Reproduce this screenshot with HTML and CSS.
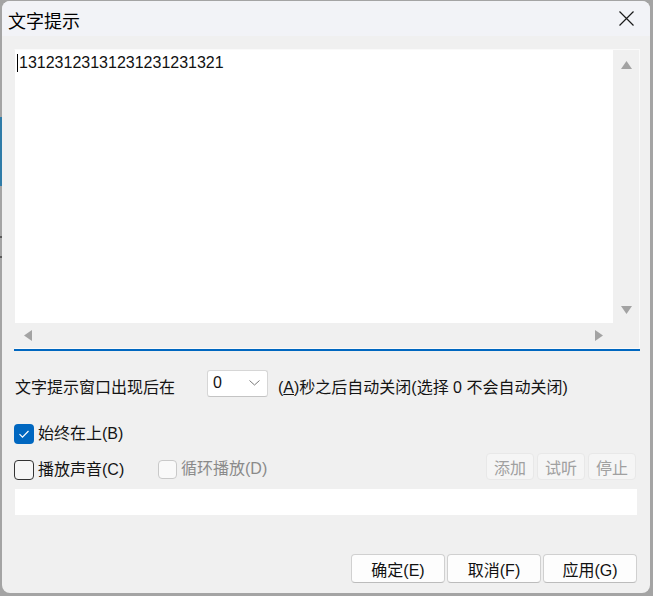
FILE: index.html
```html
<!DOCTYPE html>
<html lang="zh-CN">
<head>
<meta charset="utf-8">
<title>文字提示</title>
<link rel="stylesheet" href="styles.css">
</head>
<body>
<div class="window">
  <div class="titlebar">
    <span class="title">文字提示</span>
    <svg class="close" width="15" height="15" viewBox="0 0 15 15"><path d="M0.5 0.5 L14.5 14.5 M14.5 0.5 L0.5 14.5" stroke="#1a1a1a" stroke-width="1.2" fill="none"/></svg>
  </div>
  <div class="content">
    <div class="editor">
      <div class="editor-inner">
        <div class="text-area"><span class="caret"></span>13123123131231231231321</div>
        <div class="vscroll">
          <svg width="11" height="8" viewBox="0 0 11 8"><polygon points="5.5,0 11,8 0,8" fill="#a3a3a3"/></svg>
          <svg width="11" height="8" viewBox="0 0 11 8"><polygon points="0,0 11,0 5.5,8" fill="#a3a3a3"/></svg>
        </div>
        <div class="hscroll">
          <svg width="8" height="11" viewBox="0 0 8 11"><polygon points="8,0 8,11 0,5.5" fill="#a3a3a3"/></svg>
          <svg width="8" height="11" viewBox="0 0 8 11"><polygon points="0,0 8,5.5 0,11" fill="#a3a3a3"/></svg>
        </div>
        <div class="corner"></div>
      </div>
    </div>

    <div class="row-delay">
      <span class="label-delay">文字提示窗口出现后在</span>
      <div class="combo">
        <span>0</span>
        <svg width="11" height="6" viewBox="0 0 11 6"><path d="M0.5 0.5 L5.5 5 L10.5 0.5" stroke="#7a7a7a" stroke-width="1" fill="none"/></svg>
      </div>
      <span class="after">(<u>A</u>)秒之后自动关闭(选择 0 不会自动关闭)</span>
    </div>

    <div class="row-top">
      <span class="check checked">
        <svg width="20" height="20" viewBox="0 0 20 20"><path d="M5.5 10.2 L8.5 13.2 L14.5 7" stroke="#fff" stroke-width="1.2" fill="none"/></svg>
      </span>
      <span class="check-label">始终在上(B)</span>
    </div>

    <div class="row-sound">
      <div class="sound-left">
        <span class="check"></span>
        <span class="check-label">播放声音(C)</span>
      </div>
      <div class="sound-loop">
        <span class="check disabled"></span>
        <span class="check-label muted">循环播放(D)</span>
      </div>
      <div class="sound-buttons">
        <span class="btn-small">添加</span>
        <span class="btn-small">试听</span>
        <span class="btn-small">停止</span>
      </div>
    </div>

    <div class="path-field"></div>

    <div class="footer">
      <span class="btn">确定(E)</span>
      <span class="btn">取消(F)</span>
      <span class="btn">应用(G)</span>
    </div>
  </div>
</div>
</body>
</html>
```
FILE: styles.css
```css
html, body {
  margin: 0;
  padding: 0;
}
body {
  width: 653px;
  height: 596px;
  overflow: hidden;
  background-color: #a4a4a4;
  background-image: linear-gradient(to bottom, transparent 117px, #2f7ca8 117px, #2f7ca8 186px, transparent 186px, transparent 236px, #5a5a5a 236px, #5a5a5a 238px, transparent 238px, transparent 256px, #5a5a5a 256px, #5a5a5a 258px, transparent 258px);
  background-size: 2px 100%;
  background-repeat: no-repeat;
  font-family: "Liberation Sans", "Noto Sans CJK SC", sans-serif;
  font-size: 16px;
  color: #141414;
}
.window {
  margin: 1px 0 0 2px;
  width: 648px;
  height: 592px;
  border-radius: 8px;
  overflow: hidden;
  background: #f0f0f0;
  display: flex;
  flex-direction: column;
}
.titlebar {
  height: 35px;
  flex: none;
  background: #f2f3f7;
  display: flex;
  align-items: center;
  justify-content: space-between;
  padding: 0 16px 0 6px;
}
.title {
  font-family: "Noto Sans CJK SC", sans-serif;
  font-size: 18px;
  line-height: 20px;
  color: #000;
  padding-top: 2px;
}
.close {
  display: block;
}
.content {
  padding: 13px 10px 0 12px;
  display: flex;
  flex-direction: column;
}
.editor {
  width: 626px;
  height: 302px;
  box-sizing: border-box;
  border-bottom: 2px solid #0067c0;
}
.editor-inner {
  height: 300px;
  box-sizing: border-box;
  border: 1px solid #fafafa;
  border-left-color: #f0f0f0;
  display: grid;
  grid-template-columns: 598px 26px;
  grid-template-rows: 273px 25px;
}
.text-area {
  background: #fff;
  padding: 4px 2px;
  font-size: 16px;
  line-height: 18px;
  color: #111;
  display: flex;
  align-items: flex-start;
}
.caret {
  display: inline-block;
  width: 1px;
  height: 18px;
  background: #000;
  margin-right: 1px;
}
.vscroll {
  background: #f0f0f0;
  display: flex;
  flex-direction: column;
  justify-content: space-between;
  align-items: center;
  padding: 11px 0 9px;
}
.hscroll {
  background: #f0f0f0;
  display: flex;
  justify-content: space-between;
  align-items: center;
  padding: 0 10px 0 9px;
}
.corner {
  background: #f0f0f0;
}
.vscroll svg, .hscroll svg, .combo svg, .check svg {
  display: block;
}
.row-delay {
  margin-top: 19px;
  height: 27px;
  display: flex;
  align-items: center;
}
.label-delay {
  width: 192px;
  padding-left: 1px;
  padding-top: 5px;
  font-family: "Noto Sans CJK SC", sans-serif;
}
.combo {
  width: 61px;
  height: 27px;
  box-sizing: border-box;
  background: #fff;
  border: 1px solid #d6d6d6;
  border-bottom-color: #c4c4c4;
  border-radius: 3px;
  display: flex;
  align-items: center;
  justify-content: space-between;
  padding: 0 7px 2px 5px;
}
.after {
  margin-left: 10px;
  padding-top: 5px;
}
.row-top {
  margin-top: 27px;
  height: 20px;
  display: flex;
  align-items: center;
}
.check {
  width: 20px;
  height: 20px;
  box-sizing: border-box;
  border-radius: 4px;
  border: 1px solid #333;
  background: #f6f6f6;
  flex: none;
}
.check.checked {
  border: none;
  background: #0067c0;
}
.check.disabled {
  width: 19px;
  height: 19px;
  border-color: #c9c9c9;
  background: #f9f9f9;
}
.check-label {
  margin-left: 4px;
  line-height: 20px;
}
.muted {
  color: #8a8a8a;
}
.row-sound {
  margin-top: 9px;
  height: 27px;
  display: flex;
  align-items: flex-end;
}
.sound-left {
  width: 144px;
  display: flex;
  align-items: center;
}
.sound-loop {
  display: flex;
  align-items: center;
  margin-bottom: 1px;
}
.sound-buttons {
  margin-left: auto;
  margin-right: 4px;
  display: flex;
  gap: 3px;
}
.btn-small {
  width: 48px;
  height: 27px;
  box-sizing: border-box;
  border: 1px solid #e8e8e8;
  border-radius: 4px;
  background: #f5f5f5;
  color: #a0a0a0;
  display: flex;
  align-items: center;
  justify-content: center;
}
.path-field {
  margin: 9px 3px 0 1px;
  height: 26px;
  background: #fff;
}
.footer {
  margin-top: 39px;
  margin-right: 3px;
  display: flex;
  justify-content: flex-end;
  gap: 2px;
}
.btn {
  width: 94px;
  height: 29px;
  box-sizing: border-box;
  border: 1px solid #d0d0d0;
  border-bottom-color: #bcbcbc;
  border-radius: 4px;
  background: #fdfdfd;
  color: #111;
  display: flex;
  align-items: center;
  justify-content: center;
}
```
